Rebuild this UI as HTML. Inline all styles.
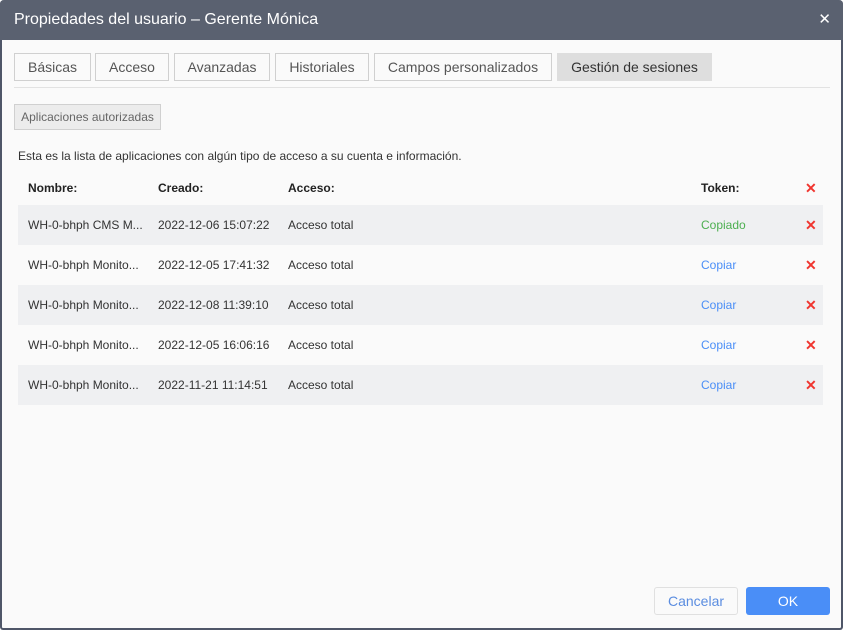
<!DOCTYPE html>
<html><head><meta charset="utf-8"><style>
*{margin:0;padding:0;box-sizing:border-box}
body{width:843px;height:630px;background:#fff;font-family:"Liberation Sans",sans-serif;overflow:hidden}
.dlg{position:absolute;left:0;top:0;width:843px;height:630px;background:#fafafa;border:2px solid #4f5668;border-top:none;border-radius:4px 4px 3px 3px}
.hd{position:absolute;left:-2px;top:0;width:843px;height:40px;background:#5a6170;color:#fff;font-size:16px;line-height:40px;padding-left:14px;border-radius:4px 4px 0 0}
.cl{position:absolute;right:12px;top:0;font-size:15px;color:#fff}
.tab{position:absolute;top:53px;height:28px;border:1px solid #d0d0d0;background:#fafafa;color:#555;font-size:14px;line-height:26px;text-align:center}
.tab.a{background:#dedede;border-color:#dedede;color:#333}
.line{position:absolute;left:12px;top:87px;width:816px;height:1px;background:#e2e2e2}
.btn{position:absolute;left:12px;top:104px;width:147px;height:26px;background:#ececec;border:1px solid #d0d0d0;font-size:12px;color:#666;line-height:24px;text-align:center}
.desc{position:absolute;left:16px;top:149px;font-size:12px;color:#333}
.row{position:absolute;left:16px;width:805px;height:40px;font-size:12px;color:#333;line-height:40px}
.row.g{background:#eff0f2}
.row span{position:absolute;top:0}
.row b{position:absolute;top:0}
.x{color:#f0352f;font-size:14px;left:787px;font-weight:bold}
.cancel{position:absolute;left:652px;top:587px;width:84px;height:28px;border:1px solid #e0e0e0;border-radius:3px;color:#5b8de0;font-size:14px;text-align:center;line-height:26px;background:#fafafa}
.ok{position:absolute;left:744px;top:587px;width:84px;height:28px;border-radius:3px;background:#4a8ef7;color:#fff;font-size:14px;text-align:center;line-height:28px}
</style></head><body>
<div class="dlg">
<div class="hd">Propiedades del usuario – Gerente Mónica<span class="cl">✕</span></div>
<div class="tab" style="left:12px;width:77px">Básicas</div>
<div class="tab" style="left:93px;width:74px">Acceso</div>
<div class="tab" style="left:172px;width:96px">Avanzadas</div>
<div class="tab" style="left:273px;width:94px">Historiales</div>
<div class="tab" style="left:372px;width:178px">Campos personalizados</div>
<div class="tab a" style="left:555px;width:155px">Gestión de sesiones</div>
<div class="line"></div>
<div class="btn">Aplicaciones autorizadas</div>
<div class="desc">Esta es la lista de aplicaciones con algún tipo de acceso a su cuenta e información.</div>
<div class="row" style="top:168px;font-weight:bold;color:#222"><b style="left:10px">Nombre:</b><b style="left:140px">Creado:</b><b style="left:270px">Acceso:</b><b style="left:683px">Token:</b><span class="x">✕</span></div>
<div class="row g" style="top:205px"><span style="left:10px">WH-0-bhph CMS M...</span><span style="left:140px">2022-12-06 15:07:22</span><span style="left:270px">Acceso total</span><span style="left:683px;color:#4caf50">Copiado</span><span class="x">✕</span></div>
<div class="row" style="top:245px"><span style="left:10px">WH-0-bhph Monito...</span><span style="left:140px">2022-12-05 17:41:32</span><span style="left:270px">Acceso total</span><span style="left:683px;color:#4a8ef7">Copiar</span><span class="x">✕</span></div>
<div class="row g" style="top:285px"><span style="left:10px">WH-0-bhph Monito...</span><span style="left:140px">2022-12-08 11:39:10</span><span style="left:270px">Acceso total</span><span style="left:683px;color:#4a8ef7">Copiar</span><span class="x">✕</span></div>
<div class="row" style="top:325px"><span style="left:10px">WH-0-bhph Monito...</span><span style="left:140px">2022-12-05 16:06:16</span><span style="left:270px">Acceso total</span><span style="left:683px;color:#4a8ef7">Copiar</span><span class="x">✕</span></div>
<div class="row g" style="top:365px"><span style="left:10px">WH-0-bhph Monito...</span><span style="left:140px">2022-11-21 11:14:51</span><span style="left:270px">Acceso total</span><span style="left:683px;color:#4a8ef7">Copiar</span><span class="x">✕</span></div>
<div class="cancel">Cancelar</div>
<div class="ok">OK</div>
</div>
</body></html>
